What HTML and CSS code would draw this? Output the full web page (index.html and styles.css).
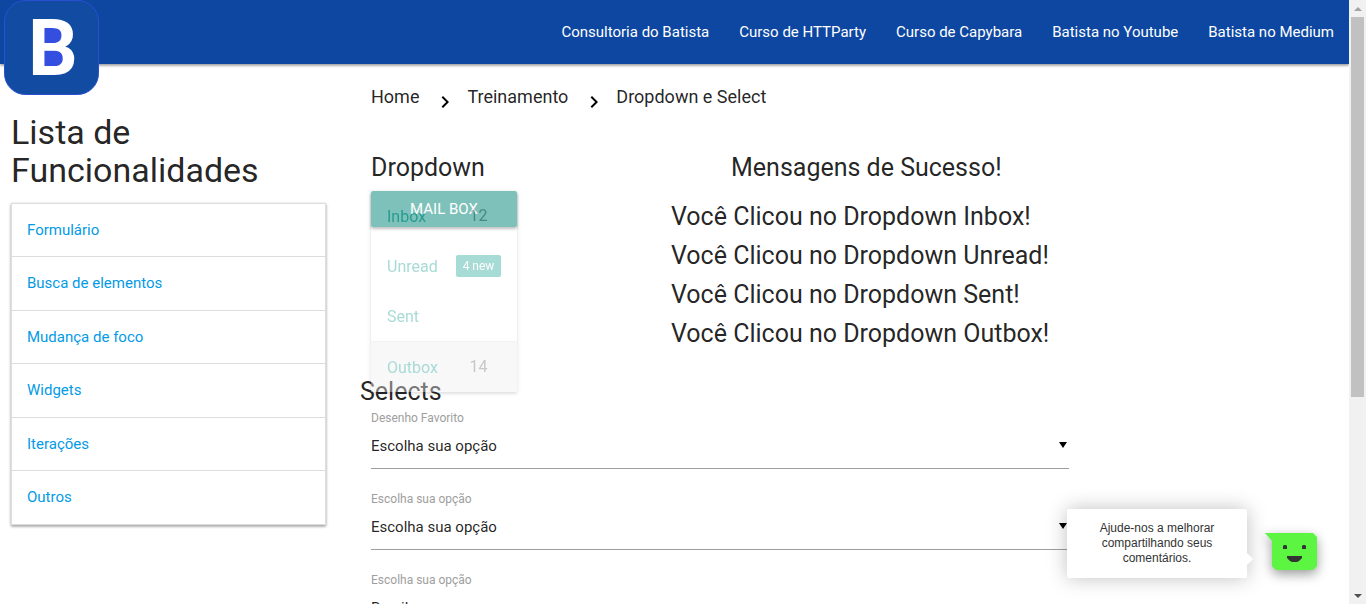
FILE: index.html
```html
<!DOCTYPE html>
<html lang="pt-BR">
<head>
<meta charset="utf-8">
<title>Dropdown e Select</title>
<link rel="stylesheet" href="styles.css">
</head>
<body>
<div class="viewport">
  <div class="app">
    <header class="navbar">
      <a class="logo" href="#" aria-label="Batista">
        <svg width="96" height="96" viewBox="0 0 96 96" aria-hidden="true">
          <rect class="logo-tile" x="0.5" y="0.5" width="94" height="94" rx="21"/>
          <rect class="logo-hole" x="37" y="27" width="24" height="40"/>
          <text class="logo-letter" x="24" y="75">B</text>
        </svg>
      </a>
      <nav class="nav-links">
        <a href="#">Consultoria do Batista</a>
        <a href="#">Curso de HTTParty</a>
        <a href="#">Curso de Capybara</a>
        <a href="#">Batista no Youtube</a>
        <a href="#">Batista no Medium</a>
      </nav>
    </header>
    <div class="page">
      <aside class="sidebar">
        <h4 class="sidebar-title">Lista de Funcionalidades</h4>
        <ul class="collapsible">
          <li><a href="#">Formulário</a></li>
          <li><a href="#">Busca de elementos</a></li>
          <li><a href="#">Mudança de foco</a></li>
          <li><a href="#">Widgets</a></li>
          <li><a href="#">Iterações</a></li>
          <li><a href="#">Outros</a></li>
        </ul>
      </aside>
      <main class="content">
        <nav class="breadcrumbs">
          <a href="#">Home</a>
          <svg class="chevron" width="24" height="24" viewBox="0 0 24 24" aria-hidden="true"><path d="M10 6L8.600 7.400 13.200 12l-4.600 4.600L10 18l6-6z"/></svg>
          <a href="#">Treinamento</a>
          <svg class="chevron" width="24" height="24" viewBox="0 0 24 24" aria-hidden="true"><path d="M10 6L8.600 7.400 13.200 12l-4.600 4.600L10 18l6-6z"/></svg>
          <a href="#">Dropdown e Select</a>
        </nav>
        <div class="columns">
          <section class="dropdown-section">
            <h5 class="heading">Dropdown</h5>
            <div class="dropdown">
              <button class="btn" type="button">Mail Box</button>
              <ul class="dropdown-menu">
                <li><a href="#">Inbox<span class="badge">12</span></a></li>
                <li><a href="#">Unread<span class="badge badge-new">4 new</span></a></li>
                <li><a href="#">Sent</a></li>
                <li class="active"><a href="#">Outbox<span class="badge">14</span></a></li>
              </ul>
            </div>
          </section>
          <section class="messages">
            <h5 class="heading messages-title">Mensagens de Sucesso!</h5>
            <h5 class="heading">Você Clicou no Dropdown Inbox!</h5>
            <h5 class="heading">Você Clicou no Dropdown Unread!</h5>
            <h5 class="heading">Você Clicou no Dropdown Sent!</h5>
            <h5 class="heading">Você Clicou no Dropdown Outbox!</h5>
          </section>
        </div>
        <h5 class="heading selects-title">Selects</h5>
        <form class="fields">
          <div class="field">
            <label for="cartoon">Desenho Favorito</label>
            <div class="select-box"><select id="cartoon"><option>Escolha sua opção</option></select><span class="caret"></span></div>
          </div>
          <div class="field">
            <label for="multi">Escolha sua opção</label>
            <div class="select-box"><select id="multi"><option>Escolha sua opção</option></select><span class="caret"></span></div>
          </div>
          <div class="field">
            <label for="country">Escolha sua opção</label>
            <div class="select-box"><select id="country"><option>Brasil</option></select><span class="caret"></span></div>
          </div>
        </form>
      </main>
    </div>
    <div class="feedback">
      <p class="feedback-tip">Ajude-nos a melhorar compartilhando seus comentários.</p>
      <button class="feedback-btn" type="button" aria-label="Feedback">
        <svg width="52" height="38" viewBox="0 0 52 38" aria-hidden="true">
          <path fill="#5bf542" d="M0 0H48L52 4V33L48 37H11L7 33V8z"/>
          <path fill="#333" d="M18 16v-3l1-1h2l1 1v3zM37 16v-3l1-1h2l1 1v3zM22 23h15v2l-3 3-2 1h-5l-2-1-3-3z"/>
        </svg>
      </button>
    </div>
  </div>
  <div class="scrollbar" aria-hidden="true">
    <span class="arrow arrow-up"></span>
    <span class="track"><span class="thumb"></span></span>
    <span class="arrow arrow-down"></span>
  </div>
</div>
</body>
</html>
```
FILE: styles.css
```css
* { box-sizing: border-box; }
body {
  margin: 0;
  background: #fff;
  color: rgba(0, 0, 0, 0.87);
  font-family: Roboto, sans-serif;
  font-size: 15px;
}
a { color: inherit; text-decoration: none; }
ul { list-style: none; margin: 0; padding: 0; }
h4, h5, p { margin: 0; font-weight: 400; }

.viewport { display: flex; height: 100vh; overflow: hidden; }
.app { position: relative; flex: 1; min-width: 0; overflow: hidden; }

/* Top bar */
.navbar {
  position: relative;
  display: flex;
  justify-content: flex-end;
  height: 64px;
  background: #0d47a1;
  color: #fff;
  box-shadow: 0 2px 2px rgba(0, 0, 0, 0.14), 0 1px 3px rgba(0, 0, 0, 0.35);
}
.nav-links { display: flex; }
.nav-links a { padding: 0 15px; line-height: 64px; }
.logo { position: absolute; left: 4px; top: 0; }
.logo svg { display: block; }
.logo-tile { fill: #114ca2; stroke: #2a4fd0; }
.logo-hole { fill: #344fe0; }
.logo-letter { fill: #fff; font-family: Roboto, sans-serif; font-weight: 700; font-size: 78px; }

.page { display: grid; grid-template-columns: 337fr 23px 720fr 269fr; }

/* Sidebar */
.sidebar { padding: 49px 11px 0; }
.sidebar-title { font-size: 34px; line-height: 38px; margin-bottom: 14px; }
.collapsible {
  border: 1px solid #ddd;
  border-bottom: 0;
  box-shadow: 0 2px 2px rgba(0, 0, 0, 0.14), 0 1px 3px rgba(0, 0, 0, 0.3);
}
.collapsible a {
  display: block;
  padding: 4px 15px;
  border-bottom: 1px solid #ddd;
  color: #039be5;
  line-height: 44px;
}
.collapsible li:nth-child(even) a { padding-bottom: 5px; }

/* Content */
.content { grid-column: 3; padding-top: 20px; }
.breadcrumbs {
  display: flex;
  align-items: flex-start;
  padding: 0 11px;
  font-size: 18px;
  line-height: 26px;
}
.chevron { margin: 6px 10px 0 14px; }
.heading { font-size: 25px; line-height: 28px; }
.columns { display: grid; grid-template-columns: 5fr 7fr; margin-top: 40px; }
.dropdown-section { padding: 0 11px; }
.messages { display: grid; gap: 11px; padding: 0 11px; }
.messages-title { padding-left: 60px; margin-bottom: 10px; }

.dropdown { position: relative; width: 146px; margin-top: 9px; }
.btn {
  display: block;
  width: 100%;
  height: 36px;
  padding: 0;
  border: 0;
  border-radius: 2px;
  background: #28978c;
  box-shadow: 0 2px 3px rgba(0, 0, 0, 0.4);
  color: #fff;
  font: inherit;
  text-transform: uppercase;
}
.dropdown-menu {
  position: absolute;
  left: 0;
  top: 0;
  width: 100%;
  background: #fff;
  box-shadow: 0 2px 2px rgba(0, 0, 0, 0.14), 0 1px 5px rgba(0, 0, 0, 0.25);
  opacity: 0.4;
}
.dropdown-menu a {
  display: flex;
  align-items: center;
  justify-content: space-between;
  height: 50px;
  padding: 0 16px;
  color: #26a69a;
  font-size: 16px;
}
.dropdown-menu .active { border-top: 1px solid #e0e0e0; background: #eee; }
.badge { min-width: 45px; color: #757575; text-align: center; line-height: 22px; }
.badge-new { border-radius: 2px; background: #26a69a; color: #fff; font-size: 12px; }

.selects-title { margin-top: 30px; }
.fields { display: grid; gap: 23px; padding: 5px 11px 0; }
.field label { display: block; color: #9e9e9e; font-size: 12px; line-height: 15px; }
.select-box { position: relative; }
.select-box select {
  display: block;
  width: 100%;
  height: 43px;
  padding: 0 0 3px;
  border: 0;
  border-bottom: 1px solid #9e9e9e;
  border-radius: 0;
  background: transparent;
  color: rgba(0, 0, 0, 0.87);
  font: inherit;
  appearance: none;
}
.caret {
  position: absolute;
  right: 2px;
  top: 16px;
  border: 4px solid transparent;
  border-top: 6px solid #000;
  border-bottom: 0;
}

/* Feedback widget */
.feedback { position: absolute; right: 32px; bottom: 26px; display: flex; gap: 18px; align-items: flex-end; }
.feedback-tip {
  position: relative;
  width: 180px;
  padding: 12px 24px;
  border-radius: 2px;
  background: #fff;
  box-shadow: 0 0 20px rgba(0, 0, 0, 0.25);
  color: #333;
  font-family: "Liberation Sans", Arial, sans-serif;
  font-size: 12px;
  line-height: 15px;
  text-align: center;
}
.feedback-tip::after {
  content: "";
  position: absolute;
  left: 100%;
  top: 44px;
  border: 6px solid transparent;
  border-left-color: #fff;
  border-right: 0;
}
.feedback-btn { padding: 0 0 7px; border: 0; background: none; filter: drop-shadow(0 4px 6px rgba(0, 0, 0, 0.4)); }
.feedback-btn svg { display: block; }

/* Scroll bar */
.scrollbar { display: flex; flex-direction: column; width: 17px; background: #f1f1f1; }
.arrow { display: grid; place-items: center; height: 17px; }
.arrow::before { content: ""; border: 4px solid transparent; }
.arrow-up::before { border-top: 0; border-bottom-color: #a3a3a3; }
.arrow-down::before { border-bottom: 0; border-top-color: #505050; }
.track { flex: 1; padding: 0 2px; }
.thumb { display: block; height: 66.7%; background: #c1c1c1; }
```
